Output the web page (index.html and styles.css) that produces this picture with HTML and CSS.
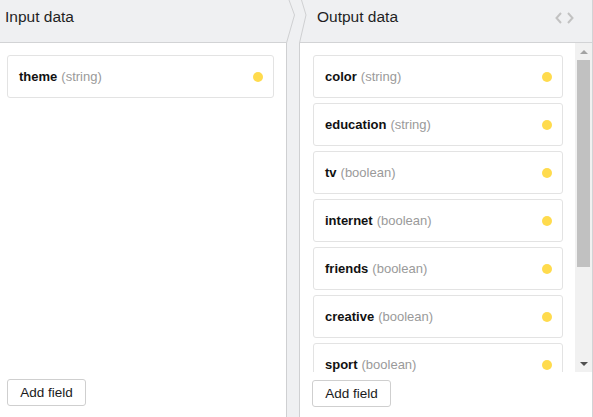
FILE: index.html
```html
<!DOCTYPE html>
<html>
<head>
<meta charset="utf-8">
<link rel="stylesheet" href="styles.css">
</head>
<body>
<div class="app">
  <div class="head head-left">Input data</div>
  <div class="head-join">
    <svg class="join-svg" width="22" height="43" viewBox="0 0 22 43">
      <polyline points="3,0 8.5,15 0.5,43" fill="none" stroke="#cfd0d2" stroke-width="1"/>
      <polyline points="15.5,0 20,15 13.5,43" fill="none" stroke="#cfd0d2" stroke-width="1"/>
    </svg>
  </div>
  <div class="head head-right">
    <span>Output data</span>
    <svg class="code-icon" width="19" height="12" viewBox="0 0 19 12">
      <polyline points="6,1 1.5,6 6,11" fill="none" stroke="#c2c2c2" stroke-width="2"/>
      <polyline points="13,1 17.5,6 13,11" fill="none" stroke="#c2c2c2" stroke-width="2"/>
    </svg>
  </div>

  <div class="body body-left">
    <div class="list">
      <div class="card"><span class="name">theme</span><span class="type">(string)</span><span class="dot"></span></div>
    </div>
    <div class="foot"><button class="btn">Add field</button></div>
  </div>
  <div class="strip"></div>
  <div class="body body-right">
    <div class="scroller">
      <div class="list list-right">
        <div class="card"><span class="name">color</span><span class="type">(string)</span><span class="dot"></span></div>
        <div class="card"><span class="name">education</span><span class="type">(string)</span><span class="dot"></span></div>
        <div class="card"><span class="name">tv</span><span class="type">(boolean)</span><span class="dot"></span></div>
        <div class="card"><span class="name">internet</span><span class="type">(boolean)</span><span class="dot"></span></div>
        <div class="card"><span class="name">friends</span><span class="type">(boolean)</span><span class="dot"></span></div>
        <div class="card"><span class="name">creative</span><span class="type">(boolean)</span><span class="dot"></span></div>
        <div class="card"><span class="name">sport</span><span class="type">(boolean)</span><span class="dot"></span></div>
      </div>
      <div class="sbar">
        <div class="sbtn"><span class="tri-up"></span></div>
        <div class="thumb"></div>
        <div class="track"></div>
        <div class="sbtn"><span class="tri-down"></span></div>
      </div>
    </div>
    <div class="foot foot-right"><button class="btn">Add field</button></div>
  </div>
</div>
</body>
</html>
```
FILE: styles.css
```css
html, body {
  margin: 0;
  padding: 0;
  background: #fff;
}
body {
  font-family: "Liberation Sans", Arial, sans-serif;
  color: #1a1a1a;
  width: 593px;
  height: 417px;
  overflow: hidden;
}
.app {
  display: grid;
  grid-template-columns: 286px 14px 293px;
  grid-template-rows: 43px 374px;
}
.head {
  background: #eff0f2;
  border-bottom: 1px solid #d2d3d5;
  font-size: 15.5px;
  color: #1f1f1f;
  display: flex;
  align-items: center;
  box-sizing: border-box;
  height: 43px;
  padding-bottom: 8px;
}
.head-left {
  padding-left: 5px;
}
.head-right {
  padding-left: 17px;
  padding-right: 18px;
  justify-content: space-between;
  border-right: 1px solid #d2d3d5;
}
.head-join {
  background: #eff0f2;
  overflow: visible;
  line-height: 0;
  z-index: 1;
}
.join-svg {
  display: block;
  overflow: visible;
}
.code-icon {
  display: block;
  margin-top: 1px;
}
.body {
  display: flex;
  flex-direction: column;
  min-height: 0;
}
.body-right {
  border-right: 1px solid #d2d3d5;
}
.strip {
  background: #eff0f2;
  border-left: 1px solid #cfd0d2;
  border-right: 1px solid #cfd0d2;
}
.list {
  display: flex;
  flex-direction: column;
  gap: 5px;
  padding: 12px 12px 0 7px;
  flex: 1;
}
.scroller {
  display: flex;
  height: 329px;
  overflow: hidden;
}
.list-right {
  padding: 12px 12px 0 13px;
  overflow: hidden;
}
.card {
  box-sizing: border-box;
  height: 43px;
  border: 1px solid #e3e3e3;
  border-radius: 3px;
  display: flex;
  align-items: center;
  padding: 0 10px 0 11px;
  font-size: 13px;
  flex-shrink: 0;
}
.name {
  font-weight: bold;
  color: #111;
}
.type {
  color: #9a9a9a;
  margin-left: 4px;
  flex: 1;
}
.dot {
  width: 10px;
  height: 10px;
  border-radius: 50%;
  background: #ffdb4d;
}
.sbar {
  width: 17px;
  flex-shrink: 0;
  background: #f1f1f1;
  display: flex;
  flex-direction: column;
  align-items: center;
}
.sbtn {
  height: 17px;
  width: 17px;
  display: flex;
  align-items: center;
  justify-content: center;
  flex-shrink: 0;
}
.tri-up {
  width: 0;
  height: 0;
  border-left: 4px solid transparent;
  border-right: 4px solid transparent;
  border-bottom: 4px solid #a3a3a3;
}
.tri-down {
  width: 0;
  height: 0;
  border-left: 4px solid transparent;
  border-right: 4px solid transparent;
  border-top: 4px solid #505050;
}
.thumb {
  width: 13px;
  height: 207px;
  background: #c1c1c1;
  flex-shrink: 0;
}
.track {
  flex: 1;
}
.foot {
  padding: 7px 0 10px 7px;
  height: 45px;
  box-sizing: border-box;
  flex-shrink: 0;
}
.foot-right {
  padding-left: 12px;
  padding-top: 8px;
}
.btn {
  font-family: "Liberation Sans", Arial, sans-serif;
  font-size: 13.5px;
  color: #1a1a1a;
  background: #fff;
  border: 1px solid #cfcfcf;
  border-radius: 3px;
  height: 27px;
  width: 79px;
  padding: 0;
}
```
